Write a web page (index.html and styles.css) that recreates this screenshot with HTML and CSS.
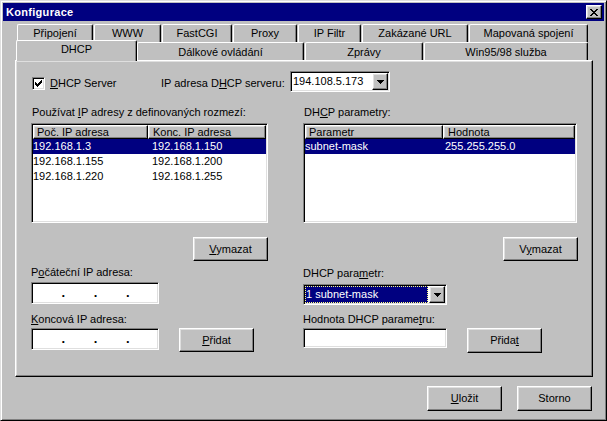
FILE: index.html
```html
<!DOCTYPE html>
<html lang="cs">
<head>
<meta charset="utf-8">
<title>Konfigurace</title>
<link rel="stylesheet" href="styles.css">
</head>
<body>
<div class="window">
  <div class="titlebar">
    <span class="title">Konfigurace</span>
    <span class="close"><svg width="8" height="7" viewBox="0 0 8 7" shape-rendering="crispEdges"><path fill="#000" d="M0 0h2v1h-2zM6 0h2v1h-2zM1 1h2v1h-2zM5 1h2v1h-2zM2 2h4v1h-4zM3 3h2v1h-2zM2 4h4v1h-4zM1 5h2v1h-2zM5 5h2v1h-2zM0 6h2v1h-2zM6 6h2v1h-2z"/></svg></span>
  </div>

  <div class="tabs">
    <div class="tabrow back">
      <div class="tab t-prip">Připojení</div>
      <div class="tab t-www">WWW</div>
      <div class="tab t-cgi">FastCGI</div>
      <div class="tab t-proxy">Proxy</div>
      <div class="tab t-filtr">IP Filtr</div>
      <div class="tab t-url">Zakázané URL</div>
      <div class="tab t-map">Mapovaná spojení</div>
    </div>
    <div class="tabrow front">
      <div class="tab sel t-dhcp">DHCP</div>
      <div class="tab t-dalk">Dálkové ovládání</div>
      <div class="tab t-zpr">Zprávy</div>
      <div class="tab t-win">Win95/98 služba</div>
    </div>
  </div>

  <div class="panel">
    <div class="toprow">
      <div class="chk">
        <span class="box"><svg width="7" height="7" viewBox="0 0 7 7" shape-rendering="crispEdges"><path fill="#000" d="M0 2h1v3h-1zM1 3h1v3h-1zM2 4h1v3h-1zM3 3h1v3h-1zM4 2h1v3h-1zM5 1h1v3h-1zM6 0h1v3h-1z"/></svg></span>
        <span class="chktxt"><u>D</u>HCP Server</span>
      </div>
      <span class="srvlabel">IP adresa D<u>H</u>CP serveru:</span>
      <div class="combo srv">
        <span class="val">194.108.5.173</span>
        <span class="ddbtn"><svg width="7" height="4" viewBox="0 0 7 4" shape-rendering="crispEdges"><path fill="#000" d="M0 0h7v1h-1v1h-1v1h-1v1h-1v-1h-1v-1h-1v-1h-1z"/></svg></span>
      </div>
    </div>

    <div class="cols">
      <div class="col left">
        <div class="lbl cap">Používat <u>I</u>P adresy z definovaných rozmezí:</div>
        <div class="list">
          <div class="lhead">
            <div class="hcell h1">Poč. IP adresa</div>
            <div class="hcell h2">Konc. IP adresa</div>
          </div>
          <div class="lrow sel"><span class="c1">192.168.1.3</span><span>192.168.1.150</span></div>
          <div class="lrow"><span class="c1">192.168.1.155</span><span>192.168.1.200</span></div>
          <div class="lrow"><span class="c1">192.168.1.220</span><span>192.168.1.255</span></div>
        </div>
        <div class="btn del"><u>V</u>ymazat</div>
        <div class="lbl lab1">P<u>o</u>čáteční IP adresa:</div>
        <div class="ipedit first"><span class="oct"></span><span class="dot">.</span><span class="oct"></span><span class="dot">.</span><span class="oct"></span><span class="dot">.</span><span class="oct"></span></div>
        <div class="lbl lab2"><u>K</u>oncová IP adresa:</div>
        <div class="pair">
          <div class="ipedit"><span class="oct"></span><span class="dot">.</span><span class="oct"></span><span class="dot">.</span><span class="oct"></span><span class="dot">.</span><span class="oct"></span></div>
          <div class="btn"><u>P</u>řidat</div>
        </div>
      </div>

      <div class="col right">
        <div class="lbl cap">DH<u>C</u>P parametry:</div>
        <div class="list">
          <div class="lhead">
            <div class="hcell h1">Parametr</div>
            <div class="hcell h2">Hodnota</div>
          </div>
          <div class="lrow sel"><span class="c1">subnet-mask</span><span>255.255.255.0</span></div>
        </div>
        <div class="btn del">V<u>y</u>mazat</div>
        <div class="lbl lab1">DHCP para<u>m</u>etr:</div>
        <div class="combo param">
          <span class="hl">1 subnet-mask</span>
          <span class="ddbtn"><svg width="7" height="4" viewBox="0 0 7 4" shape-rendering="crispEdges"><path fill="#000" d="M0 0h7v1h-1v1h-1v1h-1v1h-1v-1h-1v-1h-1v-1h-1z"/></svg></span>
        </div>
        <div class="lbl lab2">Hodnota DHCP parame<u>t</u>ru:</div>
        <div class="pair">
          <div class="edit"></div>
          <div class="btn tall">Přida<u>t</u></div>
        </div>
      </div>
    </div>
  </div>

  <div class="footer">
    <div class="btn tall"><u>U</u>ložit</div>
    <div class="btn tall">Storno</div>
  </div>
</div>
</body>
</html>
```

FILE: styles.css
```css
* { box-sizing: border-box; }
html, body { margin: 0; padding: 0; }
body {
  width: 607px;
  height: 421px;
  overflow: hidden;
  background: #c0c0c0;
  font-family: "Liberation Sans", Arial, sans-serif;
  font-size: 11px;
  color: #000;
}
u { text-decoration: underline; text-underline-offset: 1px; }

.window {
  width: 607px;
  height: 421px;
  padding: 2px;
  background: #c0c0c0;
  border: 1px solid;
  border-color: #dfdfdf #000 #000 #dfdfdf;
  box-shadow: inset 1px 1px #fff, inset -1px -1px #808080;
}

.titlebar {
  height: 18px;
  background: #000080;
  display: flex;
  align-items: center;
  justify-content: space-between;
  padding: 0 2px 0 3px;
}
.title {
  color: #fff;
  font-weight: bold;
  letter-spacing: 0.3px;
  line-height: 14px;
}
.close {
  width: 16px;
  height: 14px;
  background: #c0c0c0;
  border: 1px solid;
  border-color: #fff #000 #000 #fff;
  box-shadow: inset -1px -1px #808080, inset 1px 1px #dfdfdf;
  display: flex;
  align-items: center;
  justify-content: center;
}
.close svg { display: block; margin-left: -1px; }

/* tabs */
.tabs { margin: 3px 11px 0 12px; }
.tabrow { display: flex; height: 18px; }
.back { padding-left: 2px; }
.front { padding-left: 1px; align-items: flex-end; }
.tab {
  height: 18px;
  flex: none;
  background: #c0c0c0;
  border-top: 1px solid #fff;
  border-left: 1px solid #fff;
  border-right: 1px solid #000;
  box-shadow: inset -1px 0 #808080;
  border-radius: 2px 2px 0 0;
  text-align: center;
  line-height: 16px;
  margin-right: 1px;
  white-space: nowrap;
}
.front .tab { padding-top: 1px; }
.front .tab.sel {
  position: relative;
  z-index: 1;
  height: 21px;
  margin-top: -2px;
  margin-bottom: -1px;
  margin-right: 0;
  padding-top: 0;
}
.t-prip { width: 76px; }
.t-www { width: 67px; }
.t-cgi { width: 70px; }
.t-proxy { width: 64px; }
.t-filtr { width: 63px; }
.t-url { width: 106px; }
.t-map { width: 119px; }
.t-dhcp { width: 121px; }
.t-dalk { width: 167px; }
.t-zpr { width: 118px; }
.t-win { width: 164px; }

/* panel */
.panel {
  height: 317px;
  margin: 0 11px 0 12px;
  padding: 10px 0 0 15px;
  border: 1px solid;
  border-color: #fff #000 #000 #fff;
  box-shadow: inset -1px -1px #808080, inset 1px 1px #dfdfdf;
}

.box, .combo, .list, .ipedit, .edit {
  background: #fff;
  border: 1px solid;
  border-color: #808080 #fff #fff #808080;
  box-shadow: inset 1px 1px #000, inset -1px -1px #dfdfdf;
}
.btn, .ddbtn, .hcell {
  background: #c0c0c0;
  border: 1px solid;
  border-color: #fff #000 #000 #fff;
  box-shadow: inset -1px -1px #808080, inset 1px 1px #dfdfdf;
}

.toprow { display: flex; height: 21px; align-items: flex-start; }
.chk { width: 129px; margin-left: 1px; display: flex; align-items: flex-start; }
.box {
  width: 13px;
  height: 13px;
  margin-top: 6px;
  display: flex;
  align-items: center;
  justify-content: center;
}
.box svg { display: block; }
.chktxt { margin-left: 5px; margin-top: 5px; line-height: 14px; }
.srvlabel { width: 129px; margin-top: 5px; line-height: 14px; white-space: nowrap; }

.combo { display: flex; height: 21px; padding: 1px; }
.combo.srv { width: 100px; }
.combo .val { flex: 1; padding-left: 1px; line-height: 17px; }
.ddbtn {
  width: 16px;
  height: 17px;
  flex: none;
  display: flex;
  align-items: center;
  justify-content: center;
}
.ddbtn svg { display: block; }

.cols { display: flex; gap: 35px; }
.col { display: flex; flex-direction: column; }
.col.left { width: 237px; }
.col.right { width: 275px; }
.lbl { line-height: 14px; white-space: nowrap; }
.cap { margin-top: 13px; padding-left: 1px; }

.list { margin-top: 4px; height: 100px; padding: 1px; }
.right .list { width: 274px; }
.lhead { display: flex; height: 14px; }
.hcell { line-height: 12px; padding-left: 3px; white-space: nowrap; }
.left .h1 { width: 115px; }
.right .h1 { width: 138px; }
.h2 { flex: 1; padding-left: 4px; }
.lrow { display: flex; height: 15px; line-height: 15px; white-space: nowrap; }
.lrow.sel { background: #000080; color: #fff; }
.left .c1 { width: 119px; }
.right .c1 { width: 140px; }

.btn {
  width: 75px;
  height: 24px;
  line-height: 22px;
  text-align: center;
  flex: none;
}
.btn.tall { height: 25px; line-height: 23px; }
.btn.del { align-self: flex-end; margin-top: 14px; }

.left .lab1 { margin-top: 4px; }
.right .lab1 { margin-top: 5px; }
.left .lab2 { margin-top: 8px; }
.right .lab2 { margin-top: 7px; }

.ipedit {
  width: 128px;
  height: 22px;
  display: flex;
  padding: 1px 0 1px 1px;
  flex: none;
}
.ipedit.first { margin-top: 3px; }
.oct { width: 29px; }
.dot { width: 4px; text-align: center; font-weight: bold; font-size: 13px; line-height: 18px; }

.pair { display: flex; gap: 20px; margin-top: 2px; align-items: flex-start; }

.combo.param { width: 144px; margin-top: 4px; }
.hl {
  flex: 1;
  margin-right: 1px;
  background: #000080;
  color: #fff;
  border: 1px dotted #ffff80;
  line-height: 15px;
  white-space: nowrap;
}
.edit { width: 144px; height: 20px; flex: none; }

.footer {
  display: flex;
  justify-content: flex-end;
  gap: 15px;
  margin-top: 9px;
  padding-right: 12px;
}
```
